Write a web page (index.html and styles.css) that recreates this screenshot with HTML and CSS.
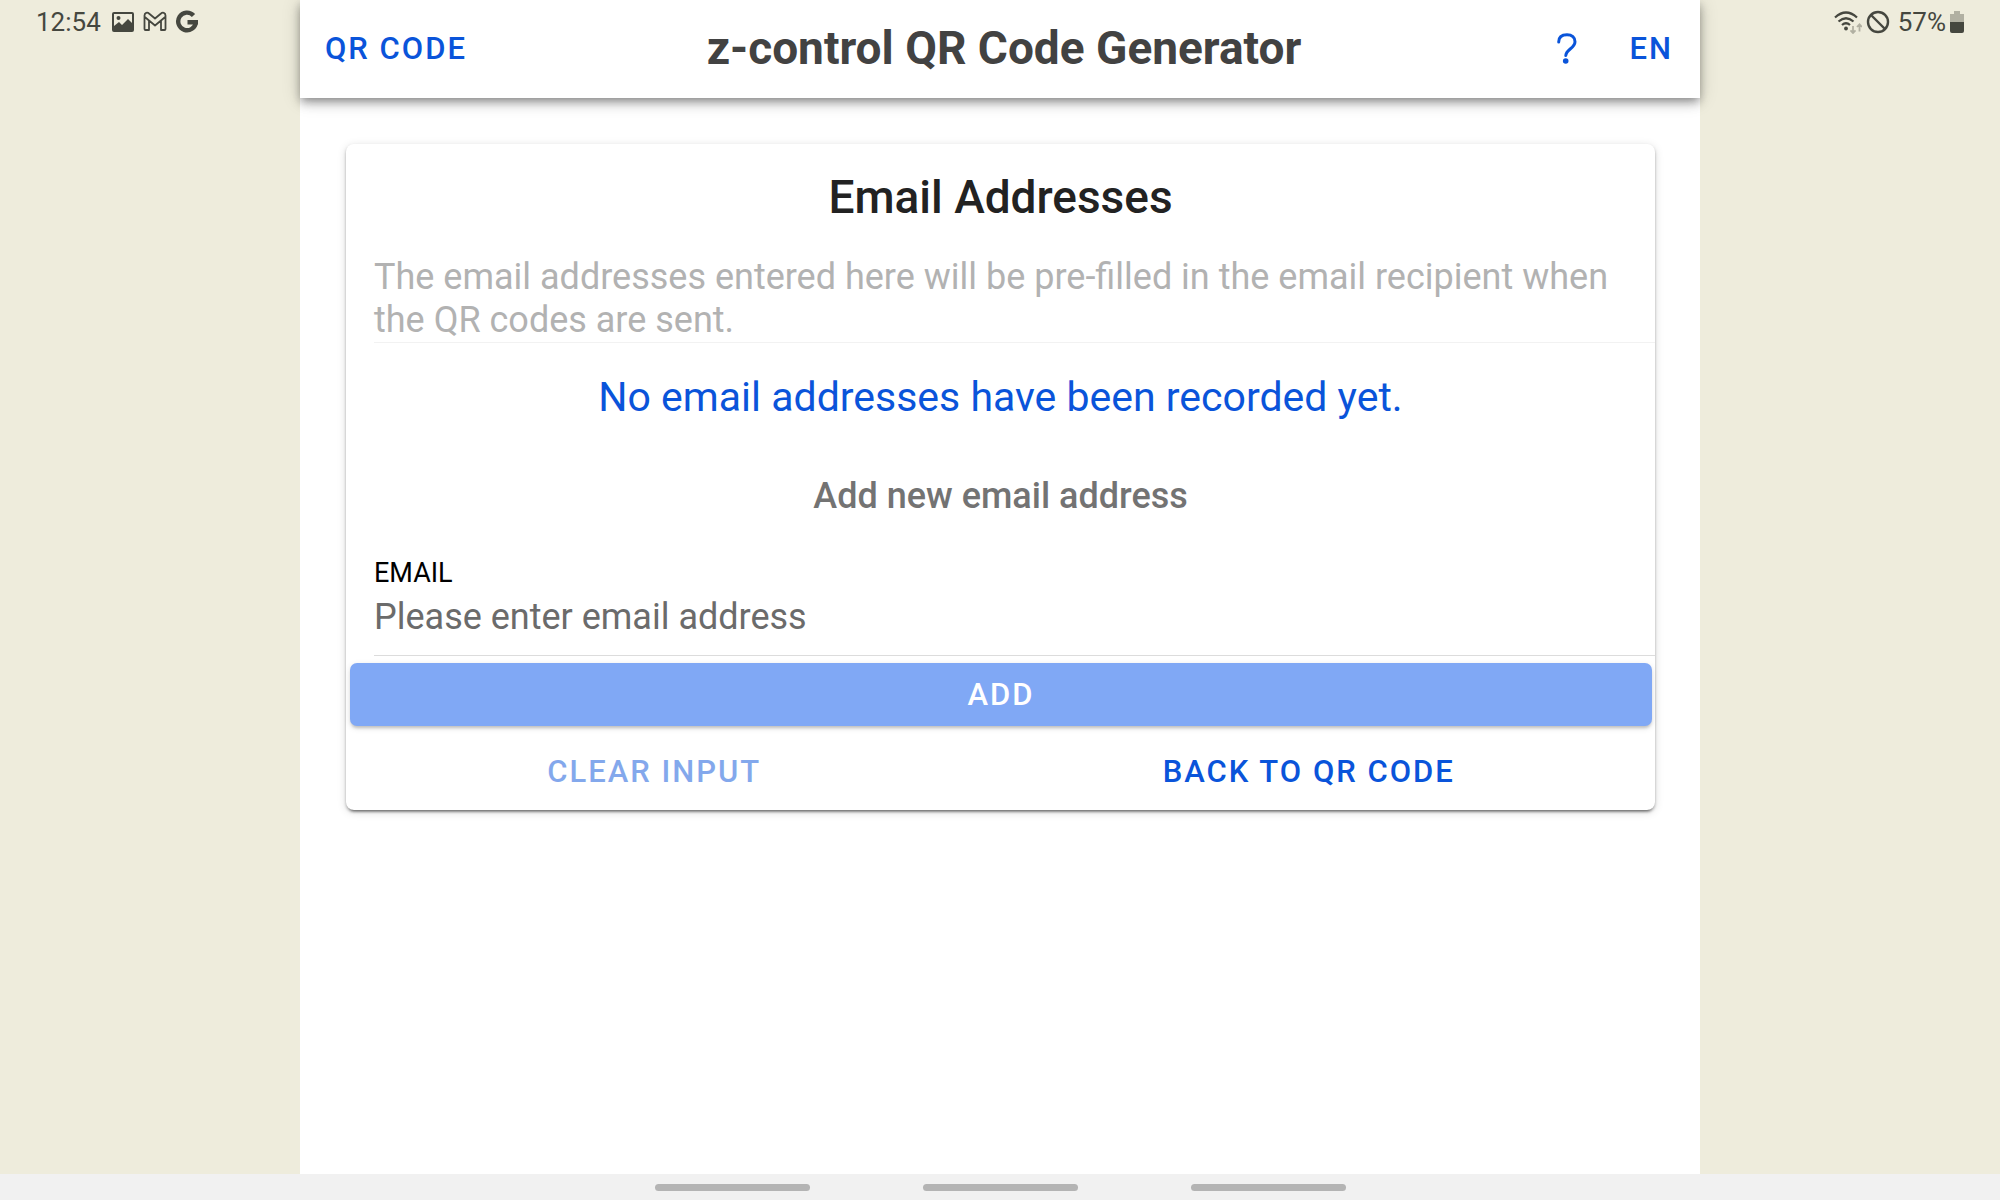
FILE: index.html
```html
<!DOCTYPE html>
<html lang="en">
<head>
<meta charset="utf-8">
<title>z-control QR Code Generator</title>
<link rel="stylesheet" href="styles.css">
</head>
<body>
<div class="side status-left">
  <span>12:54</span>
  <svg class="status-icon" viewBox="0 0 24 24"><path fill="currentColor" fill-rule="evenodd" d="M3 2h18q2 0 2 2v16q0 2-2 2H3q-2 0-2-2V4q0-2 2-2zM3 4v12l5-4 3 3 6-6 4 4V4zM7.500 6a2 2 0 1 1 0 4 2 2 0 0 1 0-4z"/></svg>
  <svg class="status-icon" viewBox="0 0 24 24"><path fill="none" stroke="currentColor" stroke-width="1.800" stroke-linejoin="round" d="M1.500 19V5.500c0-3 3-3.500 4.500-2L12 8.500l6-5c1.500-1.500 4.500-1 4.500 2V19q0 1-1 1H18V10.500l-6 5-6-5V20H2.500q-1 0-1-1zM6 10.500 1.800 7M18 10.500 22.200 7"/></svg>
  <svg class="status-icon" viewBox="0 0 24 24"><path fill="none" stroke="currentColor" stroke-width="4.400" d="M18.500 5.500A8.800 8.800 0 1 0 20.800 12M12.500 12.200H23"/></svg>
</div>
<div class="app">
  <header class="toolbar">
    <div class="bar-start"><button class="link-button">QR CODE</button></div>
    <h1 class="app-title">z-control QR Code Generator</h1>
    <div class="bar-end">
      <button class="help-button" aria-label="Help">
        <svg class="help-icon" viewBox="0 0 20 31"><path fill="none" stroke="currentColor" stroke-width="3" stroke-linecap="round" d="M1.700 9C1.700 4 5 1.700 10 1.700s8 2.800 8 7c0 3.300-2 5-4.800 7.300C10.500 18.200 9 19.500 8.800 22.500"/><circle cx="8.700" cy="28" r="2.800" fill="currentColor"/></svg>
      </button>
      <button class="link-button">EN</button>
    </div>
  </header>
  <main class="content">
    <form class="card">
      <h2 class="card-title">Email Addresses</h2>
      <p class="hint">The email addresses entered here will be pre-filled in the email recipient when the QR codes are sent.</p>
      <p class="empty">No email addresses have been recorded yet.</p>
      <h3 class="subtitle">Add new email address</h3>
      <div class="field">
        <label class="label" for="email">EMAIL</label>
        <input class="input" id="email" type="email" placeholder="Please enter email address">
      </div>
      <button class="add-button" type="button" disabled>ADD</button>
      <div class="actions">
        <button class="link-button" type="button" disabled>CLEAR INPUT</button>
        <button class="link-button" type="button">BACK TO QR CODE</button>
      </div>
    </form>
  </main>
</div>
<div class="side status-right">
  <svg class="wifi-icon" viewBox="0 0 28 24"><g fill="none" stroke="currentColor" stroke-width="2.200"><path d="M1 7.500Q12 -2.500 23 7.500M4.500 11.500q7.500-6.500 15 0M8 15q4-3.500 8 0"/></g><circle cx="12" cy="18.500" r="1.900" fill="currentColor"/><path fill="none" stroke="#b1b0a2" stroke-width="1.800" d="M19 16v7M16.500 20.300 19 23l2.500-2.700M25.500 21.500v-7M23 17l2.500-2.700L28 17"/></svg>
  <svg class="status-icon" viewBox="0 0 24 24"><g fill="none" stroke="currentColor" stroke-width="2.400"><circle cx="12" cy="12" r="10"/><path d="M5 5l14 14"/></g></svg>
  <span class="percent">57%</span>
  <svg class="battery-icon" viewBox="0 0 14 24"><path fill="#b1b0a2" d="M4 1h6v3h4v9H0V4h4z"/><path fill="currentColor" d="M0 12h14v9q0 2-2 2H2q-2 0-2-2z"/></svg>
</div>
<nav class="gesture-bar"><i class="handle"></i><i class="handle"></i><i class="handle"></i></nav>
</body>
</html>
```

FILE: styles.css
```css
* { box-sizing: border-box; }
body {
  margin: 0;
  min-height: 100vh;
  display: grid;
  grid-template-columns: 15% 1fr 15%;
  grid-template-rows: 1fr 26px;
  font-family: Roboto, sans-serif;
  background: #eeecdc;
}
h1, h2, h3, p { margin: 0; }
button { border: 0; padding: 0; background: none; font: inherit; }

/* Status bar */
.side { display: flex; align-items: center; height: 43px; padding: 0 36px; font-size: 26px; color: #45473f; gap: 8px; }
.status-left > span { margin-right: 2px; }
.status-right { justify-content: flex-end; gap: 4px; }
.status-icon { width: 24px; height: 24px; }
.wifi-icon { width: 28px; height: 24px; }
.battery-icon { width: 14px; height: 24px; }
.percent { margin-left: 4px; }

/* Toolbar */
.app { background: #fff; }
.toolbar {
  display: grid;
  grid-template-columns: 1fr auto 1fr;
  align-items: center;
  height: 98px;
  padding: 0 27px 2px 25px;
  box-shadow: 0 4px 8px -2px rgba(0,0,0,.3), 0 6px 10px rgba(0,0,0,.16), 0 2px 18px rgba(0,0,0,.16);
}
.app-title { padding-left: 10px; font-size: 46px; font-weight: 700; color: #424242; }
.bar-end { display: flex; justify-content: flex-end; align-items: center; gap: 52px; }
.link-button { color: #0a54da; font-size: 31px; font-weight: 500; letter-spacing: 2px; }
.link-button:disabled { opacity: .5; }
.help-button { color: #0a54da; }
.help-icon { display: block; width: 20px; height: 31px; }

/* Email card */
.content { padding: 46px 45px 46px 46px; }
.card { border-radius: 8px; box-shadow: 0 5px 3px -4px rgba(0,0,0,.4), 0 2px 3px rgba(0,0,0,.28), 0 2px 10px rgba(0,0,0,.14); }
.card-title { padding: 26px 0 25px; text-align: center; font-size: 46px; line-height: 54px; font-weight: 500; color: #222; }
.hint { margin-left: 28px; border-bottom: 1px solid #f2f2f2; font-size: 36px; line-height: 43px; color: #b2b2b2; padding: 7px 28px 0 0; }
.empty { margin-top: 30px; text-align: center; font-size: 41px; line-height: 48px; color: #0a54da; }
.subtitle { margin-top: 53px; text-align: center; font-size: 36px; line-height: 44px; font-weight: 500; color: #737373; }
.field { margin: 37px 0 0 28px; padding-bottom: 13px; border-bottom: 1px solid #dcdcdc; }
.label { display: block; font-size: 27px; line-height: 36px; }
.input { display: block; width: 100%; height: 51px; border: 0; padding: 0; background: none; font: 36px Roboto, sans-serif; }
.input::placeholder { color: #6b6b6b; }
.add-button {
  display: block;
  width: calc(100% - 7px);
  height: 63px;
  margin: 7px 3px 0 4px;
  border-radius: 7px;
  background: #80a8f5;
  color: #fff;
  font-size: 31px;
  font-weight: 500;
  letter-spacing: 2px;
  box-shadow: 0 3px 3px -1px rgba(0,0,0,.18), 0 2px 6px rgba(0,0,0,.12);
}
.actions { display: grid; grid-template-columns: 1fr 1fr; height: 84px; padding-top: 6px; }
.actions .link-button { padding-right: 38px; }

/* Navigation handles */
.gesture-bar { grid-column: 1 / -1; display: flex; justify-content: center; align-items: center; gap: 113px; background: #f1f1f1; }
.handle { width: 155px; height: 7px; border-radius: 4px; background: #b4b4b4; }
```
